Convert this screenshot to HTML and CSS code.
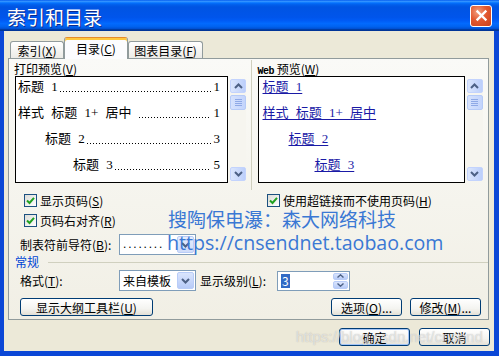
FILE: index.html
```html
<!DOCTYPE html>
<html lang="zh-CN">
<head>
    <meta charset="UTF-8">
    <meta name="viewport" content="width=device-width, initial-scale=1.0">
    <title>索引和目录</title>
    <link rel="stylesheet" href="styles.css">
</head>
<body>
    <div class="window">
        <div class="titlebar">
            <span class="title">索引和目录</span>
            <span class="close-btn">
                <svg width="13" height="13" viewBox="0 0 13 13"><path d="M2.5 2.5 L10.5 10.5 M10.5 2.5 L2.5 10.5" stroke="#fff" stroke-width="2.4" stroke-linecap="square"/></svg>
            </span>
        </div>
        <div class="frame">
            <div class="tabs">
                <div class="tab tab-index">索引(<u>X</u>)</div>
                <div class="tab tab-toc active">目录(<u>C</u>)</div>
                <div class="tab tab-fig">图表目录(<u>F</u>)</div>
            </div>
            <div class="panel">
                <div class="previews">
                    <div class="col col-print">
                        <div class="label">打印预览(<u>V</u>)</div>
                        <div class="preview-row">
                            <div class="preview print-preview">
                                <div class="toc-line"><span class="toc-text">标题 1</span><span class="dots"></span><span class="num">1</span></div>
                                <div class="toc-line"><span class="toc-text">样式 标题 1+ 居中</span><span class="dots gap"></span><span class="num">1</span></div>
                                <div class="toc-line lvl2"><span class="toc-text">标题 2</span><span class="dots"></span><span class="num">3</span></div>
                                <div class="toc-line lvl3"><span class="toc-text">标题 3</span><span class="dots"></span><span class="num">5</span></div>
                            </div>
                            <div class="scrollbar">
                                <div class="sb-btn"><svg width="9" height="6" viewBox="0 0 9 6"><path d="M1 5 L4.5 1.5 L8 5" fill="none" stroke="#4d6185" stroke-width="2"/></svg></div>
                                <div class="sb-thumb"><i></i><i></i><i></i><i></i></div>
                                <div class="sb-track"></div>
                                <div class="sb-btn"><svg width="9" height="6" viewBox="0 0 9 6"><path d="M1 1 L4.5 4.5 L8 1" fill="none" stroke="#4d6185" stroke-width="2"/></svg></div>
                            </div>
                        </div>
                    </div>
                    <div class="sep"></div>
                    <div class="col col-web">
                        <div class="label"><span class="web">Web</span> 预览(<u>W</u>)</div>
                        <div class="preview-row">
                            <div class="preview web-preview">
                                <div class="toc-line"><a class="link">标题 1</a></div>
                                <div class="toc-line"><a class="link">样式 标题 1+ 居中</a></div>
                                <div class="toc-line lvl2"><a class="link">标题 2</a></div>
                                <div class="toc-line lvl3"><a class="link">标题 3</a></div>
                            </div>
                            <div class="scrollbar">
                                <div class="sb-btn"><svg width="9" height="6" viewBox="0 0 9 6"><path d="M1 5 L4.5 1.5 L8 5" fill="none" stroke="#4d6185" stroke-width="2"/></svg></div>
                                <div class="sb-thumb"><i></i><i></i><i></i><i></i></div>
                                <div class="sb-track"></div>
                                <div class="sb-btn"><svg width="9" height="6" viewBox="0 0 9 6"><path d="M1 1 L4.5 4.5 L8 1" fill="none" stroke="#4d6185" stroke-width="2"/></svg></div>
                            </div>
                        </div>
                    </div>
                </div>

                <div class="opt-row">
                    <div class="opt-left"><span class="checkbox"><svg width="9" height="9" viewBox="0 0 9 9"><path d="M1 4.5 L3.5 7 L8 1.8" fill="none" stroke="#21a121" stroke-width="2"/></svg></span>显示页码(<u>S</u>)</div>
                    <div class="opt-right"><span class="checkbox"><svg width="9" height="9" viewBox="0 0 9 9"><path d="M1 4.5 L3.5 7 L8 1.8" fill="none" stroke="#21a121" stroke-width="2"/></svg></span>使用超链接而不使用页码(<u>H</u>)</div>
                </div>
                <div class="opt-row">
                    <div class="opt-left"><span class="checkbox"><svg width="9" height="9" viewBox="0 0 9 9"><path d="M1 4.5 L3.5 7 L8 1.8" fill="none" stroke="#21a121" stroke-width="2"/></svg></span>页码右对齐(<u>R</u>)</div>
                </div>
                <div class="field-row leader-row">
                    <span class="field-label">制表符前导符(<u>B</u>):</span>
                    <div class="combo">
                        <span class="combo-value leader">........</span>
                        <span class="combo-btn"><svg width="9" height="6" viewBox="0 0 9 6"><path d="M1 1 L4.5 4.5 L8 1" fill="none" stroke="#4d6185" stroke-width="2"/></svg></span>
                    </div>
                </div>
                <div class="group-head"><span class="group-title">常规</span><span class="group-line"></span></div>
                <div class="field-row">
                    <span class="field-label">格式(<u>T</u>):</span>
                    <div class="combo">
                        <span class="combo-value">来自模板</span>
                        <span class="combo-btn"><svg width="9" height="6" viewBox="0 0 9 6"><path d="M1 1 L4.5 4.5 L8 1" fill="none" stroke="#4d6185" stroke-width="2"/></svg></span>
                    </div>
                    <span class="field-label level-label">显示级别(<u>L</u>):</span>
                    <div class="spinner">
                        <span class="spin-value"><span class="selected">3</span></span>
                        <span class="spin-btns">
                            <span class="spin-btn"><svg width="7" height="4" viewBox="0 0 7 4"><path d="M0.5 3.5 L3.5 0.8 L6.5 3.5" fill="none" stroke="#4d6185" stroke-width="1.4"/></svg></span>
                            <span class="spin-btn"><svg width="7" height="4" viewBox="0 0 7 4"><path d="M0.5 0.5 L3.5 3.2 L6.5 0.5" fill="none" stroke="#4d6185" stroke-width="1.4"/></svg></span>
                        </span>
                    </div>
                </div>
                <div class="btn-row">
                    <button class="btn btn-outline">显示大纲工具栏(<u>U</u>)</button>
                    <button class="btn btn-options">选项(<u>O</u>)...</button>
                    <button class="btn">修改(<u>M</u>)...</button>
                </div>
            </div>
            <div class="dialog-buttons">
                <button class="btn btn-default">确定</button>
                <button class="btn">取消</button>
            </div>
        </div>

        <div class="watermark wm-name">搜陶保电瀑：森大网络科技</div>
        <div class="watermark wm-url">https://cnsendnet.taobao.com</div>
        <div class="watermark wm-blog">https://blog.csdn.net/cnsend</div>
    </div>
</body>
</html>
```

FILE: styles.css
```css
* {
    box-sizing: border-box;
}
body {
    margin: 0;
    background-color: #fff;
    font-family: "Noto Sans CJK SC", sans-serif;
    font-size: 12px;
    color: #000;
}
u {
    text-underline-offset: 1px;
}
.window {
    position: relative;
    width: 499px;
    height: 356px;
    display: flex;
    flex-direction: column;
    overflow: hidden;
}

/* title bar */
.titlebar {
    flex: none;
    height: 31px;
    display: flex;
    align-items: center;
    justify-content: space-between;
    padding: 0 7px 0 7px;
    background: linear-gradient(to bottom, #0058ee 0%, #3593ff 4%, #288eff 6%, #127dff 8%, #036ffc 10%, #0262ee 14%, #0057e5 20%, #0054e3 24%, #0055eb 56%, #005bf5 66%, #026afe 76%, #0062ef 86%, #0052d6 92%, #0040ab 94%, #003092 100%);
}
.title {
    color: #fff;
    font-size: 19px;
    line-height: 24px;
    padding-top: 3px;
    text-shadow: 1px 1px 0 #0c2a8c;
}
.close-btn {
    width: 22px;
    height: 22px;
    border: 1px solid #fff;
    border-radius: 3px;
    background: radial-gradient(circle at 35% 30%, #f2a080 0%, #e2582f 45%, #c9401a 100%);
    display: flex;
    align-items: center;
    justify-content: center;
}

/* window frame */
.frame {
    flex: 1;
    display: flex;
    flex-direction: column;
    background-color: #ece9d8;
    border-style: solid;
    border-color: #0b47d6;
    border-width: 0 5px 5px 4px;
    padding: 6px 5px 0 4px;
}

/* tabs */
.tabs {
    position: relative;
    z-index: 1;
    display: flex;
    align-items: flex-end;
    height: 22px;
    margin-bottom: -1px;
    padding-left: 2px;
}
.tab {
    height: 17px;
    margin-bottom: 1px;
    border: 1px solid #919b9c;
    border-bottom: none;
    border-radius: 3px 3px 0 0;
    background: linear-gradient(#fff, #ecebe6);
    text-align: center;
    line-height: 15px;
    padding-top: 1px;
}
.tab-index {
    width: 54px;
}
.tab-toc {
    width: 64px;
}
.tab-fig {
    width: 75px;
}
.tab.active {
    height: 22px;
    margin-bottom: 0;
    background: #fcfcfe;
    border-top: 1px solid #e68b2c;
    box-shadow: inset 0 2px 0 #ffc83c;
    line-height: 18px;
    padding-top: 2px;
}

/* panel */
.panel {
    height: 262px;
    flex: none;
    border: 1px solid #919b9c;
    background: linear-gradient(#fafaf7, #f1efe5);
    padding: 3px 4px 0 5px;
}
.previews {
    display: flex;
}
.col-print {
    width: 236px;
}
.sep {
    width: 1px;
    height: 130px;
    margin: -2px 5px 0 1px;
    background-color: #d0d0bf;
}
.col-web {
    width: 228px;
}
.label {
    height: 14px;
    line-height: 14px;
    white-space: nowrap;
}
.col-web .label {
    padding-left: 1px;
}
.web {
    font-family: "Liberation Mono", monospace;
    font-size: 10px;
    font-weight: bold;
    letter-spacing: -0.5px;
}
.preview-row {
    display: flex;
    align-items: flex-start;
}
.preview {
    height: 107px;
    border: 1px solid #000;
    background-color: #fff;
    overflow: hidden;
    font-family: "Liberation Serif", "Noto Sans CJK SC", serif;
    font-size: 13px;
    word-spacing: 4px;
}
.print-preview {
    width: 213px;
    margin-left: 1px;
    padding: 0 7px 0 2px;
}
.web-preview {
    width: 207px;
    margin-left: 1px;
    padding: 0 4px 0 4px;
}
.toc-line {
    display: flex;
    height: 20px;
    line-height: 20px;
    margin-bottom: 6px;
    white-space: nowrap;
}
.toc-line.lvl2 {
    padding-left: 27px;
}
.toc-line.lvl3 {
    padding-left: 55px;
}
.web-preview .toc-line.lvl2 {
    padding-left: 26px;
}
.web-preview .toc-line.lvl3 {
    padding-left: 52px;
}
/* dotted tab leader */
.dots {
    flex: 1;
    margin: 0 1px 0 1px;
    background-image: linear-gradient(to right, #000 1px, transparent 1px);
    background-size: 3px 1px;
    background-repeat: repeat-x;
    background-position: 1px 14px;
}
.dots.gap {
    margin-left: 6px;
}
.num {
    padding-left: 2px;
}
.link {
    color: #1a1aa6;
    text-decoration: underline;
    text-underline-offset: 2px;
}

/* scrollbar */
.scrollbar {
    width: 16px;
    height: 102px;
    margin: 3px 0 0 2px;
    display: flex;
    flex-direction: column;
    background-color: #f6f5ef;
}
.sb-btn {
    height: 14px;
    border: 1px solid #c3d3fd;
    border-radius: 2px;
    background: linear-gradient(to right, #dbe6fd, #bccffb);
    display: flex;
    align-items: center;
    justify-content: center;
}
.sb-thumb {
    height: 15px;
    margin-top: 2px;
    border: 1px solid #b6cbf7;
    border-radius: 2px;
    background: linear-gradient(to right, #d6e2fd, #c3d4fc);
    display: flex;
    flex-direction: column;
    align-items: center;
    justify-content: center;
    gap: 1px;
}
.sb-thumb i {
    display: block;
    width: 7px;
    height: 1px;
    background-color: #8fa9e6;
}
.sb-track {
    flex: 1;
}

/* options */
.opt-row {
    display: flex;
    height: 20px;
    align-items: center;
}
.opt-row:first-of-type {
    margin-top: 6px;
}
.opt-left {
    width: 243px;
    display: flex;
    align-items: center;
    padding-left: 10px;
}
.opt-right {
    display: flex;
    align-items: center;
    padding-left: 10px;
}
.checkbox {
    width: 13px;
    height: 13px;
    margin-right: 3px;
    border: 1px solid #1c5180;
    background: linear-gradient(135deg, #dcdcd7, #fff);
    display: flex;
    align-items: center;
    justify-content: center;
}
.field-row {
    display: flex;
    align-items: center;
    height: 21px;
}
.leader-row {
    margin-top: 4px;
}
.field-label {
    width: 105px;
    padding-left: 6px;
    white-space: nowrap;
}
.level-label {
    width: 81px;
    padding-left: 4px;
}
.combo {
    width: 77px;
    height: 21px;
    border: 1px solid #7f9db9;
    background-color: #fff;
    display: flex;
    align-items: center;
    padding: 1px;
}
.combo-value {
    flex: 1;
    padding-left: 2px;
    line-height: 17px;
}
.combo-value.leader {
    font-family: "Liberation Sans", sans-serif;
    letter-spacing: 1.8px;
}
.combo-btn {
    width: 17px;
    height: 17px;
    border: 1px solid #b9cdf8;
    border-radius: 2px;
    background: linear-gradient(#dae5fd, #b7cbf8);
    display: flex;
    align-items: center;
    justify-content: center;
}
.leader-row .combo-btn {
    background: linear-gradient(#e6edfd, #cfdcf9);
}
.group-head {
    display: flex;
    align-items: center;
    height: 12px;
    margin-top: 1px;
    margin-right: -4px;
}
.group-title {
    color: #0046d5;
    padding-left: 1px;
    line-height: 12px;
}
.group-line {
    flex: 1;
    height: 1px;
    margin-left: 9px;
    background-color: #d0d0bf;
}
.group-head + .field-row {
    margin-top: 2px;
}
.spinner {
    width: 73px;
    height: 20px;
    border: 1px solid #7f9db9;
    background-color: #fff;
    display: flex;
    align-items: center;
    padding: 1px;
}
.spin-value {
    flex: 1;
    padding-left: 2px;
    line-height: 15px;
}
.selected {
    display: inline-block;
    background-color: #316ac5;
    color: #fff;
    padding: 0 1px;
    line-height: 14px;
}
.spin-btns {
    width: 15px;
    height: 16px;
    display: flex;
    flex-direction: column;
    gap: 1px;
}
.spin-btn {
    flex: 1;
    border: 1px solid #b9cdf8;
    border-radius: 2px;
    background: linear-gradient(#dae5fd, #b7cbf8);
    display: flex;
    align-items: center;
    justify-content: center;
}

/* buttons */
.btn-row {
    display: flex;
    margin-top: 7px;
    padding-left: 6px;
}
.btn {
    height: 18px;
    width: 71px;
    padding: 0;
    border: 1px solid #003c74;
    border-radius: 3px;
    background: linear-gradient(#fff 0%, #f4f4f0 60%, #e3e0d6 100%);
    font-family: "Noto Sans CJK SC", sans-serif;
    font-size: 12px;
    line-height: 15px;
    color: #000;
    white-space: nowrap;
}
.btn-outline {
    width: 133px;
}
.btn-options {
    margin-left: 178px;
    margin-right: 8px;
}
.dialog-buttons {
    display: flex;
    justify-content: flex-end;
    gap: 9px;
    margin-top: 8px;
    margin-right: -1px;
}
.btn-default {
    box-shadow: inset 0 0 0 1px #a4c5f6;
}

/* watermark text over the dialog */
.watermark {
    position: absolute;
    white-space: nowrap;
}
.wm-name {
    left: 168px;
    top: 206px;
    font-size: 19px;
    line-height: 26px;
    color: #3a78d4;
}
.wm-url {
    left: 167px;
    top: 230px;
    font-family: "Open Sans", sans-serif;
    font-size: 19.6px;
    line-height: 26px;
    color: #3a78d4;
}
.wm-blog {
    left: 296px;
    top: 327px;
    font-family: "Liberation Sans", sans-serif;
    font-size: 15px;
    line-height: 20px;
    color: rgba(255, 255, 255, 0.55);
    text-shadow: 0 0 1px rgba(120, 120, 120, 0.5);
}
```
